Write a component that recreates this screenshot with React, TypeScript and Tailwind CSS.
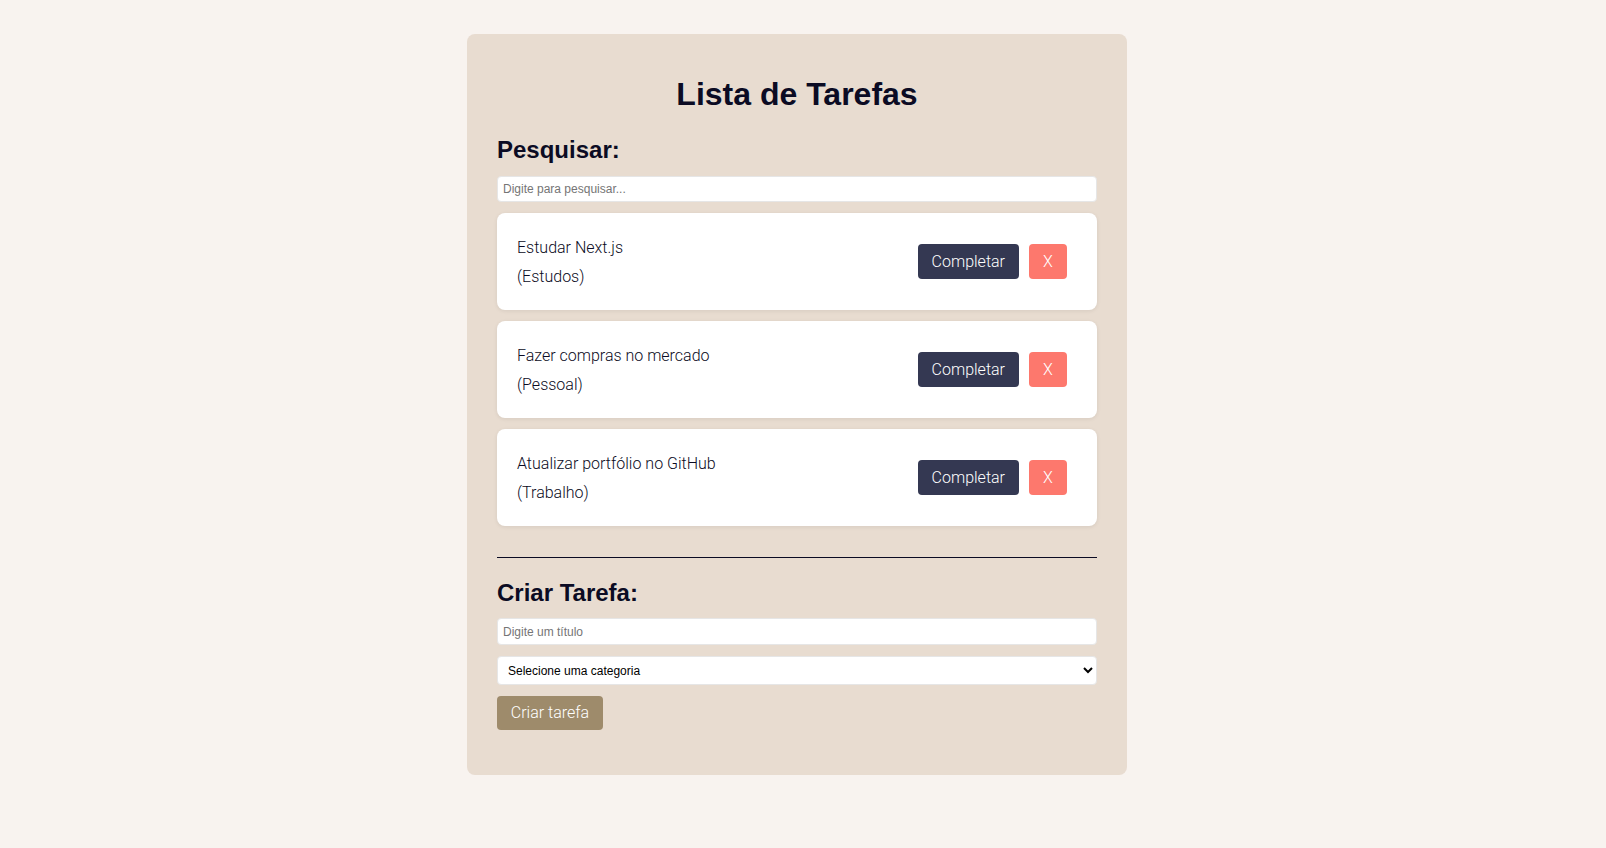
const tasks = [
  { title: 'Estudar Next.js', category: 'Estudos' },
  { title: 'Fazer compras no mercado', category: 'Pessoal' },
  { title: 'Atualizar portfólio no GitHub', category: 'Trabalho' },
];

function TaskCard({ title, category }: { title: string; category: string }) {
  return (
    <div className="flex items-center justify-between h-[97px] bg-white rounded-lg shadow-[0_1px_4px_rgba(0,0,0,0.08)] pl-5 pr-[30px]">
      <div className="text-[16px] leading-[29px] font-light text-[#0b0b23]">
        <div>{title}</div>
        <div>({category})</div>
      </div>
      <div className="flex items-center gap-[10px]">
        <button className="h-[35px] px-[14px] rounded bg-[#343852] text-white text-[16px] font-light">
          Completar
        </button>
        <button className="h-[35px] w-[38px] rounded bg-[#fd786d] text-white text-[16px] font-light">
          X
        </button>
      </div>
    </div>
  );
}

export default function App() {
  return (
    <div className="min-h-screen bg-[#f8f3ef] pt-[34px] pr-[12px]" style={{ fontFamily: 'Roboto, sans-serif' }}>
      <div className="mx-auto w-[660px] bg-[#e8dcd0] rounded-lg px-[30px] pt-[42px] pb-[45px]">
        <h1 className="text-center text-[32px] font-bold text-[#0b0b23] leading-[37px] font-['Liberation_Sans',Arial,sans-serif]">
          Lista de Tarefas
        </h1>

        <h2 className="mt-[23px] text-[24px] font-bold text-[#0b0b23] leading-[28px] font-['Liberation_Sans',Arial,sans-serif]">
          Pesquisar:
        </h2>
        <input
          className="mt-3 block w-full h-[26px] bg-white border border-[#e6e6e6] rounded-sm px-[5px] text-[12px] font-['Liberation_Sans',Arial,sans-serif] placeholder:text-[#757575] outline-none"
          placeholder="Digite para pesquisar..."
        />

        <div className="mt-[11px] flex flex-col gap-[11px]">
          {tasks.map((t) => (
            <TaskCard key={t.title} title={t.title} category={t.category} />
          ))}
        </div>

        <hr className="mt-[31px] border-0 border-t border-[#0b0b23]" />

        <h2 className="mt-[21px] text-[24px] font-bold text-[#0b0b23] leading-[28px] font-['Liberation_Sans',Arial,sans-serif]">
          Criar Tarefa:
        </h2>
        <input
          className="mt-[11px] block w-full h-[27px] bg-white border border-[#e6e6e6] rounded-sm px-[5px] text-[12px] font-['Liberation_Sans',Arial,sans-serif] placeholder:text-[#757575] outline-none"
          placeholder="Digite um título"
        />
        <select className="mt-[11px] block w-full h-[29px] bg-white border border-[#e6e6e6] rounded-sm px-[6px] text-[12px] text-black font-['Liberation_Sans',Arial,sans-serif]">
          <option>Selecione uma categoria</option>
        </select>
        <button className="mt-[11px] h-[34px] w-[106px] rounded bg-[#9e8b6b] text-white text-[16px] font-light">
          Criar tarefa
        </button>
      </div>
    </div>
  );
}
